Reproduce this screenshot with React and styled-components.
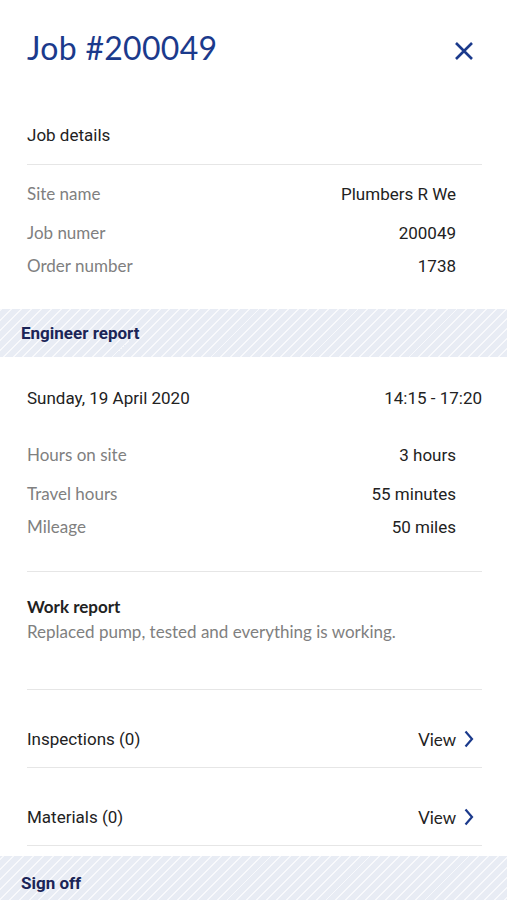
import React from "react";
import styled, { createGlobalStyle } from "styled-components";

const GlobalStyle = createGlobalStyle`
  body {
    margin: 0;
    background: #fff;
    font-family: Roboto, "Liberation Sans", sans-serif;
    -webkit-font-smoothing: antialiased;
  }
`;

const Page = styled.div`
  width: 507px;
  min-height: 900px;
  background: #fff;
  overflow: hidden;
`;

const Header = styled.header`
  height: 106px;
  box-sizing: border-box;
  padding: 29px 33px 0 27px;
  display: flex;
  justify-content: space-between;
  align-items: flex-start;
`;

const Title = styled.h1`
  margin: 0;
  font-family: Lato, "Open Sans", sans-serif;
  font-weight: 400;
  font-size: 32px;
  line-height: 38px;
  color: #1b3a8c;
  letter-spacing: 0.3px;
`;

const CloseButton = styled.button`
  border: 0;
  background: none;
  padding: 0;
  margin-top: 12px;
  width: 20px;
  height: 20px;
  cursor: pointer;
`;

const Section = styled.section`
  padding: ${(p) => p.pad || "0"};
  margin: 0 25px 0 27px;
  border-bottom: ${(p) => (p.divider ? "1px solid #e6e6e6" : "none")};
`;

const SubHead = styled.div`
  height: 58px;
  display: flex;
  align-items: center;
  font-size: 17px;
  color: #222;
  border-bottom: 1px solid #e6e6e6;
  margin: 0 25px 0 27px;
`;

const Row = styled.div`
  display: flex;
  justify-content: space-between;
  align-items: center;
  height: 20px;
  padding-right: ${(p) => (p.flush ? "0" : "26px")};
  margin-bottom: ${(p) => p.after || 0}px;
`;

const Label = styled.span`
  font-family: Lato, "Open Sans", sans-serif;
  font-size: 17px;
  color: #808080;
`;

const Value = styled.span`
  font-size: 17px;
  color: #222;
  position: relative;
  top: 1px;
`;

const Plain = styled.span`
  font-size: 17px;
  color: #222;
`;

const Band = styled.div`
  height: ${(p) => p.h || 48}px;
  margin-top: ${(p) => p.top || 0}px;
  box-sizing: border-box;
  padding: ${(p) => p.pt || 0}px 21px 0;
  display: flex;
  align-items: ${(p) => (p.pt ? "flex-start" : "center")};
  background-color: #e8ecf4;
  background-image: repeating-linear-gradient(
    -45deg,
    transparent 0px,
    transparent 5.6px,
    rgba(255, 255, 255, 0.7) 5.6px,
    rgba(255, 255, 255, 0.7) 7px
  );
  font-weight: 700;
  font-size: 17px;
  color: #1b2557;
`;

const ReportTitle = styled.div`
  font-family: Lato, "Open Sans", sans-serif;
  font-weight: 700;
  font-size: 17px;
  line-height: 20px;
  color: #222;
`;

const ReportText = styled.div`
  font-family: Lato, "Open Sans", sans-serif;
  font-size: 17px;
  line-height: 20px;
  margin-top: 5px;
  color: #808080;
`;

const LinkRow = styled.div`
  display: flex;
  justify-content: space-between;
  align-items: center;
  height: 20px;
  padding: 39px 8px 18px 0;
  border-bottom: 1px solid #e6e6e6;
  margin: 0 25px 0 27px;
`;

const ViewLink = styled.a`
  display: flex;
  align-items: center;
  gap: 7px;
  font-family: Lato, "Open Sans", sans-serif;
  font-size: 17px;
  color: #222;
  text-decoration: none;
`;

const Chevron = () => (
  <svg width="11" height="18" viewBox="0 0 11 18">
    <path d="M2.5 1.5 L9 9 L2.5 16.5" fill="none" stroke="#1b3a8c" strokeWidth="2.2" />
  </svg>
);

export default function App() {
  return (
    <Page>
      <GlobalStyle />
      <Header>
        <Title>Job #200049</Title>
        <CloseButton aria-label="Close">
          <svg width="20" height="20" viewBox="0 0 20 20">
            <path d="M2 2 L18 18 M18 2 L2 18" stroke="#1b3a8c" strokeWidth="2.6" />
          </svg>
        </CloseButton>
      </Header>

      <SubHead>Job details</SubHead>
      <Section pad="18px 0 34px">
        <Row after={19}>
          <Label>Site name</Label>
          <Value>Plumbers R We</Value>
        </Row>
        <Row after={13}>
          <Label>Job numer</Label>
          <Value>200049</Value>
        </Row>
        <Row>
          <Label>Order number</Label>
          <Value>1738</Value>
        </Row>
      </Section>

      <Band>Engineer report</Band>

      <Section pad="31px 0 35px" divider>
        <Row flush after={36}>
          <Plain>Sunday, 19 April 2020</Plain>
          <Plain>14:15 - 17:20</Plain>
        </Row>
        <Row after={19}>
          <Label>Hours on site</Label>
          <Value>3 hours</Value>
        </Row>
        <Row after={13}>
          <Label>Travel hours</Label>
          <Value>55 minutes</Value>
        </Row>
        <Row>
          <Label>Mileage</Label>
          <Value>50 miles</Value>
        </Row>
      </Section>

      <Section pad="25px 0 47px" divider>
        <ReportTitle>Work report</ReportTitle>
        <ReportText>Replaced pump, tested and everything is working.</ReportText>
      </Section>

      <LinkRow>
        <Plain>Inspections (0)</Plain>
        <ViewLink href="#">
          View <Chevron />
        </ViewLink>
      </LinkRow>
      <LinkRow>
        <Plain>Materials (0)</Plain>
        <ViewLink href="#">
          View <Chevron />
        </ViewLink>
      </LinkRow>

      <Band top={10} h={60} pt={17}>Sign off</Band>
    </Page>
  );
}
